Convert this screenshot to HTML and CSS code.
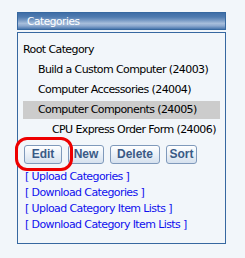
FILE: index.html
```html
<!DOCTYPE html>
<html>
<head>
<meta charset="utf-8">
<link rel="stylesheet" href="styles.css">
</head>
<body>
<div class="panel">
  <div class="panel-head">Categories</div>
  <div class="panel-body">
    <div class="tree">
      <div class="row lvl0">Root Category</div>
      <div class="row lvl1">Build a Custom Computer (24003)</div>
      <div class="row lvl1">Computer Accessories (24004)</div>
      <div class="row selected"><span>Computer Components (24005)</span></div>
      <div class="row lvl2">CPU Express Order Form (24006)</div>
    </div>
    <div class="buttons">
      <button class="btn btn-edit">Edit</button>
      <button class="btn btn-new">New</button>
      <button class="btn btn-delete">Delete</button>
      <button class="btn btn-sort">Sort</button>
    </div>
    <div class="links">
      <a href="#">[ Upload Categories ]</a>
      <a href="#">[ Download Categories ]</a>
      <a href="#">[ Upload Category Item Lists ]</a>
      <a href="#">[ Download Category Item Lists ]</a>
    </div>
  </div>
</div>
<div class="annotation"></div>
</body>
</html>
```

FILE: styles.css
```css
html, body {
  margin: 0;
  padding: 0;
  background: #f2f6fa;
}
body {
  font-family: "DejaVu Sans", Tahoma, sans-serif;
  font-size: 11px;
  letter-spacing: -0.6px;
  color: #000;
  height: 258px;
}
.panel {
  position: relative;
  margin: 12px 0 0 17px;
  width: 209px;
}
.panel-head {
  box-sizing: border-box;
  height: 18px;
  border: 1px solid #3768a0;
  background: linear-gradient(to bottom, #3f6ea7 0%, #4f7bb0 25%, #7799c4 45%, #a7bedb 65%, #8eaad0 80%, #4a77ad 100%);
  color: #fff;
  padding-left: 9px;
  line-height: 16px;
  letter-spacing: -0.4px;
  font-size: 10.5px;
}
.panel-body {
  box-sizing: border-box;
  margin-top: 2px;
  border: 1px solid #3768a0;
  padding: 7px 5px 7px 5px;
  height: 212px;
}
.row {
  height: 20px;
  line-height: 20px;
  white-space: nowrap;
}
.lvl0 { padding-left: 0; }
.lvl1 { padding-left: 15px; }
.lvl2 { padding-left: 29px; }
.row.selected {
  padding-top: 1px;
  height: 19px;
}
.row.selected span {
  display: block;
  height: 18px;
  line-height: 18px;
  background: #cccccc;
  padding-left: 15px;
}
.buttons {
  display: flex;
  gap: 6px;
  margin-top: 5px;
  padding-left: 1px;
}
.btn {
  box-sizing: border-box;
  height: 19px;
  padding: 0;
  border: 1px solid #7f99bb;
  border-radius: 3px;
  background: linear-gradient(to bottom, #ffffff 0%, #eef3f9 40%, #d6e1ee 100%);
  color: #3a5a86;
  font-family: "Liberation Sans", Arial, sans-serif;
  font-weight: bold;
  font-size: 12px;
  letter-spacing: 0;
  line-height: 17px;
  text-align: center;
}
.btn-edit { width: 38px; }
.btn-new { width: 36px; }
.btn-delete { width: 50px; }
.btn-sort { width: 31px; }
.links {
  display: flex;
  flex-direction: column;
  margin-top: 5px;
  padding-left: 2px;
}
.links a {
  color: #1010ee;
  text-decoration: none;
  line-height: 16px;
  height: 16px;
  white-space: nowrap;
}
.annotation {
  position: absolute;
  left: 15px;
  top: 137px;
  width: 52px;
  height: 28px;
  border: 3px solid #ee0000;
  border-radius: 12px;
}
```
